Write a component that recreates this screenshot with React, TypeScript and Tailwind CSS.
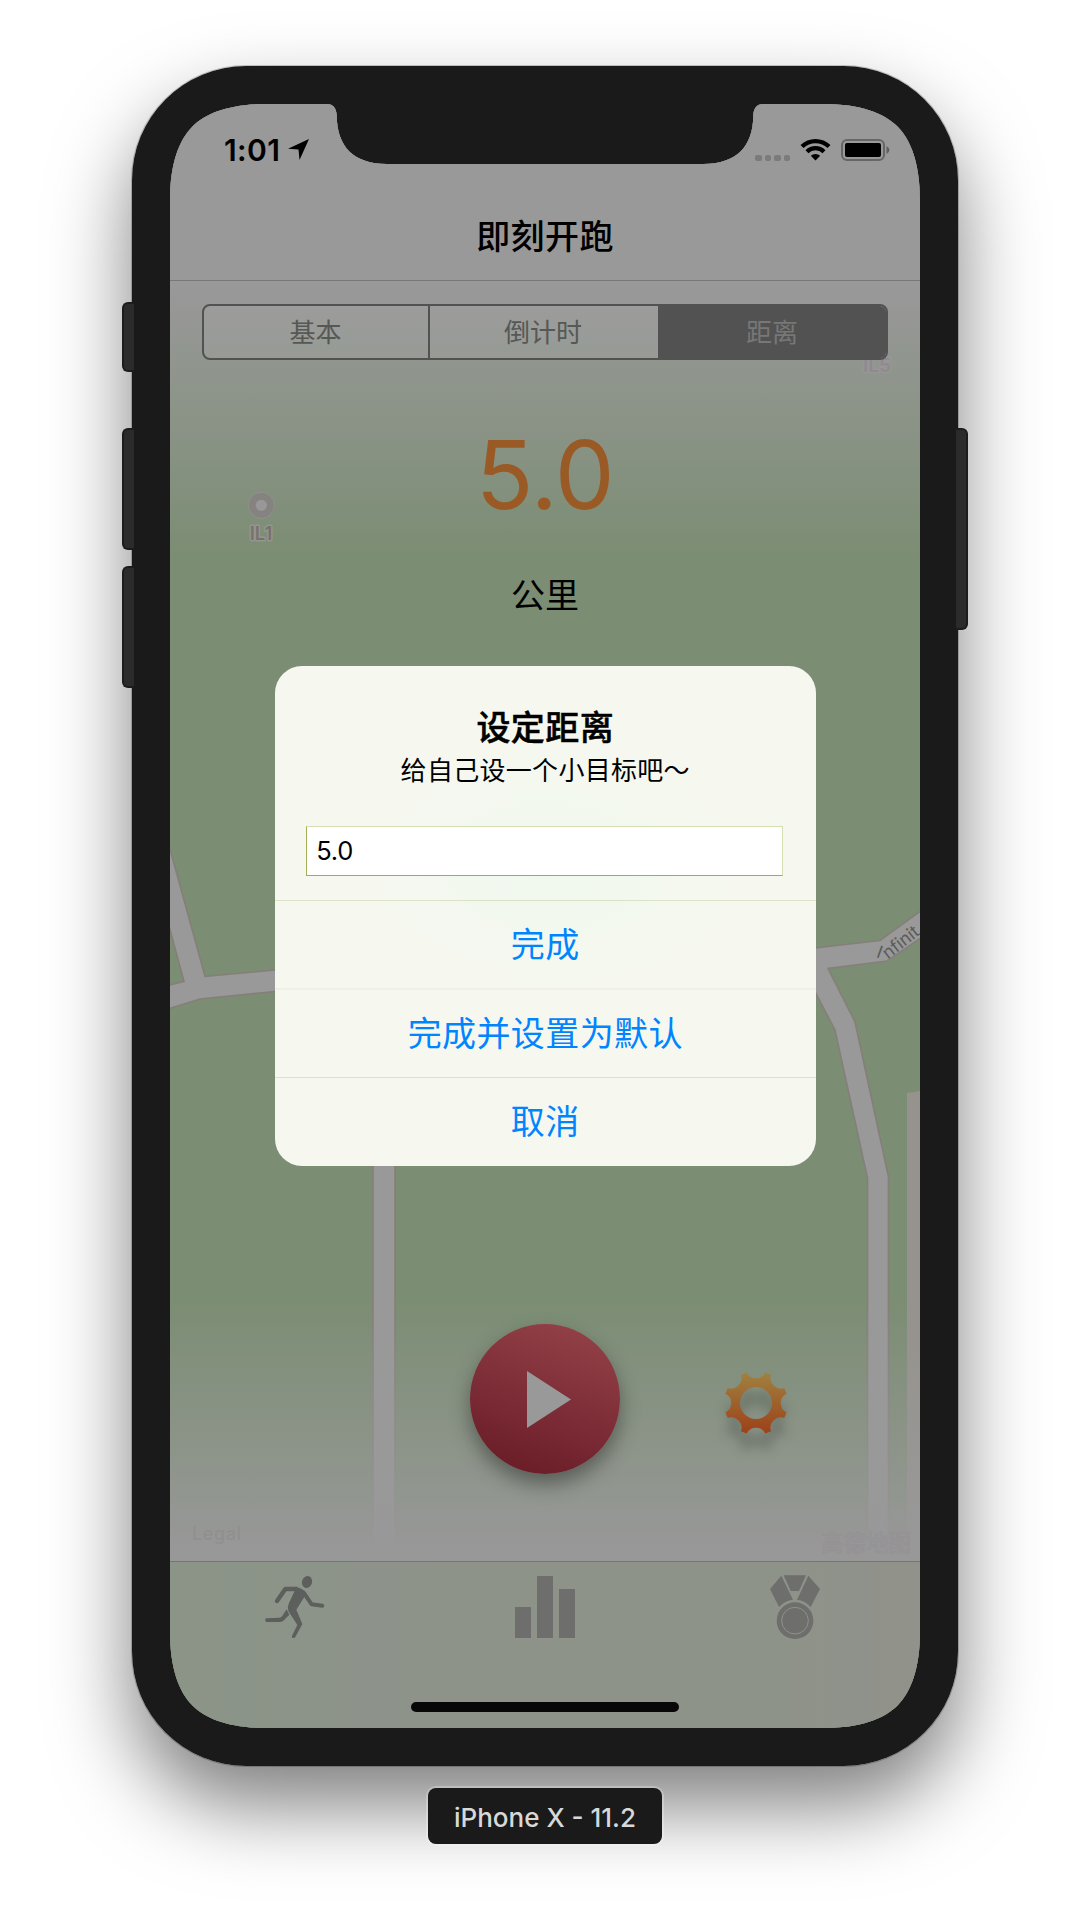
import React from "react";

const polar = (radius: number, degrees: number) => {
  const a = ((degrees - 90) * Math.PI) / 180;
  return `${(32 + radius * Math.cos(a)).toFixed(2)} ${(32 + radius * Math.sin(a)).toFixed(2)}`;
};

const gearPath =
  Array.from({ length: 8 }, (_, i) => {
    const valley = i * 45;
    return `${i === 0 ? "M" : "L"}${polar(32, valley - 17)} A10.4 10.4 0 0 0 ${polar(32, valley + 17)}`;
  }).join(" ") + " Z M16 32 a16 16 0 1 0 32 0 a16 16 0 1 0 -32 0 Z";

function MapBackground() {
  return (
    <svg className="absolute inset-0 h-full w-full" viewBox="170 104 750 1624">
      <defs>
        <linearGradient id="fadeTop" x1="0" y1="0" x2="0" y2="1">
          <stop offset="0" stopColor="#999999" />
          <stop offset="0.08" stopColor="#999899" stopOpacity="0.94" />
          <stop offset="0.36" stopColor="#999999" stopOpacity="0.65" />
          <stop offset="0.62" stopColor="#999999" stopOpacity="0.42" />
          <stop offset="1" stopColor="#999999" stopOpacity="0" />
        </linearGradient>
        <linearGradient id="fadeBottom" x1="0" y1="0" x2="0" y2="1">
          <stop offset="0" stopColor="#999999" stopOpacity="0" />
          <stop offset="0.4" stopColor="#999999" stopOpacity="0.42" />
          <stop offset="0.7" stopColor="#999999" stopOpacity="0.7" />
          <stop offset="0.93" stopColor="#999899" stopOpacity="0.95" />
          <stop offset="1" stopColor="#999899" />
        </linearGradient>
      </defs>
      <rect x="170" y="104" width="750" height="1624" fill="#7b8d73" />
      <path
        d="M165 831 L205 976.5 L275 970 L815 948 L880 940.5 L925 908 V935 L887 961 L828 968.5 L855 1022 L888.5 1177 V1570 H867.5 V1178 L835 1030 L812 986 H395 V1570 H373 V986 L275 991.5 L200 999 L165 1010 V986 L184 981.5 L165 911 Z"
        fill="#999999"
        stroke="#857f7a"
        strokeWidth="1.6"
      />
      <path d="M907 1093 L920 1091 V1565 H907 Z" fill="#96928d" />
      <g fontFamily="Inter, sans-serif" fontSize="17.5" fill="#5c5c5b">
        <text transform="translate(875.5 957) rotate(20)">I</text>
        <text transform="translate(888 959.5) rotate(-38)">nfinit</text>
      </g>
      <rect x="170" y="281" width="750" height="274" fill="url(#fadeTop)" />
      <rect x="170" y="1300" width="750" height="261" fill="url(#fadeBottom)" />
      <circle cx="261.3" cy="505.3" r="13" fill="#858280" stroke="#8f928c" strokeWidth="1" />
      <circle cx="261.3" cy="505.3" r="5.6" fill="#999798" />
      <g fontFamily="Inter, sans-serif" fontWeight="600" textAnchor="middle" paintOrder="stroke" strokeLinejoin="round">
        <text x="261" y="539.5" fontSize="18.5" fill="#75726d" stroke="#95958f" strokeWidth="3">IL1</text>
        <text x="877" y="372" fontSize="19" fill="#8e8b8d" stroke="#989698" strokeWidth="3">IL5</text>
      </g>
      <text x="192" y="1540" fontFamily="Inter, sans-serif" fontSize="18" fontWeight="500" letterSpacing="0.6" fill="#918f8f">
        Legal
      </text>
      <text x="821" y="1551" fontFamily="'Noto Sans CJK SC', sans-serif" fontSize="22.5" fontWeight="500" fill="#979597" stroke="#929192" strokeWidth="0.5">
        高德地图
      </text>
    </svg>
  );
}

function StatusBar() {
  return (
    <div className="flex h-[88px] items-start justify-between pt-[34px] pr-[30px] pl-[54px]">
      <div className="flex items-start gap-[7px]">
        <span className="w-[57px] text-[30px] leading-[25px] font-semibold tracking-[0.4px] text-black">1:01</span>
        <svg className="mt-px h-[21px] w-[21px]" viewBox="0 0 62 62">
          <path d="M62 0 L0 29 L31 31 L34 62 Z" fill="black" />
        </svg>
      </div>
      <div className="flex items-start">
        <div className="mt-[17px] mr-[10px] flex gap-[3px]">
          {[0, 1, 2, 3].map((i) => (
            <span key={i} className="h-[6px] w-[6.4px] rounded-[2px] bg-[#7b7b7b]" />
          ))}
        </div>
        <svg className="mr-[10px] h-[23px] w-[31px]" viewBox="0 0 31 23">
          <g fill="none" stroke="black" strokeWidth="4.2">
            <path d="M2 8.6 A19.2 19.2 0 0 1 29 8.6" />
            <path d="M7 13.7 A12 12 0 0 1 24 13.7" />
          </g>
          <path d="M15.5 22.5 L10.8 17.8 A6.8 6.8 0 0 1 20.2 17.8 Z" fill="black" />
        </svg>
        <div className="mt-px h-[22px] w-[44px] rounded-[6px] border-2 border-[#666666] p-[2px]">
          <div className="h-full w-full rounded-[2px] bg-black" />
        </div>
        <svg className="mt-[8px] ml-[1px] h-[8px] w-[4px]" viewBox="0 0 4 8">
          <path d="M0.5 0 Q3.5 2 3.5 4 Q3.5 6 0.5 8 Z" fill="#5f5f5f" />
        </svg>
      </div>
    </div>
  );
}

function RunnerIcon() {
  return (
    <svg className="mr-[2px] h-[64px] w-[61px]" viewBox="315 285 183 192" fill="none" stroke="#5d5f5c" strokeLinecap="round" strokeLinejoin="round">
      <ellipse cx="444" cy="306" rx="15" ry="18" transform="rotate(20 444 306)" fill="#5d5f5c" stroke="none" />
      <path d="M354 363 L379 327 H412" strokeWidth="13" />
      <path d="M434 338 L458 373 L490 377" strokeWidth="12" />
      <path d="M402 321 Q430 320 442 341 L412 389 L430 432 L409 471 Q406 475 399 473 V467 L415 435 L388 393 Q384 380 390 369 L407 332 Z" fill="#5d5f5c" stroke="none" />
      <path d="M383 388 L391 404 L373 422 Q369 426 361 426 H322 A6 6 0 0 1 322 415 L361 413.500 Q366 413 369 409 Z" fill="#5d5f5c" stroke="none" />
    </svg>
  );
}

function MedalIcon() {
  return (
    <svg className="h-[64px] w-[50px]" viewBox="690 285 150 192" fill="#6e6e6c">
      <path d="M731 286 H798 L777 333 H752 Z" />
      <path d="M724 287 L759 359 Q735 362 717 381 L690 327 Z" />
      <path d="M805 287 L840 327 L812 381 Q795 362 771 359 Z" />
      <circle cx="765" cy="422" r="55" />
      <circle cx="765" cy="422" r="40" fill="none" stroke="#8e938a" strokeWidth="3" />
    </svg>
  );
}

function TabBar() {
  return (
    <nav className="relative flex h-[167px] justify-around border-t border-[#747673] bg-[linear-gradient(to_right,#8b9587,#8d938a_25%,#8d9389_78%,#91928b)] pt-[13px]">
      <button className="flex h-[64px] w-[250px] justify-center">
        <RunnerIcon />
      </button>
      <button className="mt-px flex h-[62px] w-[250px] items-end justify-center gap-[5.5px]">
        <span className="h-[31px] w-[16.500px] bg-[#6e6e6c]" />
        <span className="h-[62px] w-[16.500px] bg-[#6e6e6c]" />
        <span className="h-[49px] w-[16.500px] bg-[#6e6e6c]" />
      </button>
      <button className="flex h-[64px] w-[250px] justify-center">
        <MedalIcon />
      </button>
      <span className="absolute bottom-[16px] left-[241px] h-[10px] w-[268px] rounded-full bg-[#080808]" />
    </nav>
  );
}

function Dialog() {
  return (
    <section className="absolute top-[562px] left-[105px] flex h-[500px] w-[540.5px] flex-col rounded-[27px] bg-[#f6f8f0] bg-[radial-gradient(ellipse_190px_120px_at_270px_200px,#f0f8ee,#f6f8f0)] text-center">
      <div className="flex h-[234px] shrink-0 flex-col items-center">
        <h2 className="mt-[40px] text-[34px] leading-[44px] font-medium tracking-[0.4px] text-black [-webkit-text-stroke:0.5px_black]">设定距离</h2>
        <p className="mt-[5px] text-[26px] leading-[32px] tracking-[0.3px] text-black">给自己设一个小目标吧～</p>
        <div className="mt-[39px] ml-[-1px] flex h-[50px] w-[477px] items-center border border-t-[#d5dfb4] border-r-[#d5dfb4] border-b-[#93b060] border-l-[#a3b055] bg-white pl-[9px] text-[25.500px] tracking-[-0.3px] text-black">
          5.0
        </div>
      </div>
      <button className="h-[88px] shrink-0 border-t border-[#dbe2c5] text-[34px] leading-[88px] tracking-[0.4px] text-[#0085ff]">完成</button>
      <button className="h-[89px] shrink-0 border-t-2 border-[#eff1e9] text-[34px] leading-[88px] tracking-[0.4px] text-[#0085ff]">完成并设置为默认</button>
      <button className="h-[89px] shrink-0 border-t border-[#dbe2c5] text-[34px] leading-[88px] tracking-[0.4px] text-[#0085ff]">取消</button>
    </section>
  );
}

function Screen() {
  return (
    <div className="relative flex h-[1624px] w-[750px] flex-col overflow-hidden bg-[#999999] [clip-path:path('M0,96_C0,60_9,36_22.5,22.5_C36,9_60,0_96,0_L157,0_C163,0_166.5,4_166.8,12_C167,43_184,60_217,60_L533,60_C566,60_583,43_583.2,12_C583.5,4_587,0_593,0_L654,0_C690,0_714,9_727.5,22.5_C741,36_750,60_750,96_L750,1528_C750,1564_741,1588_727.5,1601.5_C714,1615_690,1624_654,1624_L96,1624_C60,1624_36,1615_22.5,1601.5_C9,1588_0,1564_0,1528_Z')]">
      <MapBackground />
      <header className="relative h-[177px] border-b border-[#787878] bg-[#999999]">
        <StatusBar />
        <h1 className="text-center text-[34px] leading-[89px] font-medium tracking-[0.4px] text-black">即刻开跑</h1>
      </header>
      <main className="relative flex-1">
        <div className="mx-[32px] mt-[23px] flex h-[56px] overflow-hidden rounded-[8px] border-2 border-[#525252] bg-white/5 text-[26px] leading-[54px] text-[#565856]">
          <button className="w-[226px] border-r-2 border-[#525252] pr-px">基本</button>
          <button className="w-[228px] pr-[2px]">倒计时</button>
          <button className="flex-1 bg-[#525252] text-[#777777]">距离</button>
        </div>
        <div className="mt-[55px] text-center text-[95px] leading-[120px] font-normal tracking-[-0.5px] text-[#9a5a26]">5.0</div>
        <div className="mt-[39px] text-center text-[34px] leading-[44px] font-normal text-black">公里</div>
        <div className="mt-[706px] flex h-[150px] items-center pl-[300px]">
          <button className="flex h-[150px] w-[150px] items-center justify-center rounded-full bg-[linear-gradient(20deg,#681c26_5%,#7c2c36_45%,#944249_95%)] shadow-[0_10px_20px_rgba(0,0,0,0.38)]">
            <svg className="ml-[8px] h-[57px] w-[44px]" viewBox="0 0 44 57">
              <path d="M0 0 L44 28.500 L0 57 Z" fill="#999999" />
            </svg>
          </button>
          <svg className="mt-[7px] ml-[104px] h-[64px] w-[64px] overflow-visible drop-shadow-[0_17px_6px_rgba(0,0,0,0.2)]" viewBox="0 0 64 64">
            <defs>
              <linearGradient id="gearFill" x1="0" y1="0" x2="0" y2="1">
                <stop offset="0" stopColor="#a08240" />
                <stop offset="1" stopColor="#9c4118" />
              </linearGradient>
            </defs>
            <path d={gearPath} fill="url(#gearFill)" fillRule="evenodd" />
          </svg>
        </div>
      </main>
      <TabBar />
      <Dialog />
    </div>
  );
}

export default function App() {
  return (
    <div className="flex h-[1928px] w-[1090px] flex-col items-center overflow-hidden bg-white font-['Inter','Noto_Sans_CJK_SC',sans-serif]">
      <div className="relative mt-[66px] h-[1700px] w-[826px] shrink-0">
        <div className="absolute inset-0 rounded-[114px] shadow-[0_0_0_1px_rgba(0,0,0,0.2),0_40px_80px_rgba(0,0,0,0.5)]" />
        <div className="relative h-full w-full rounded-[114px] bg-[#1a1a1a] p-[38px]">
          <Screen />
        </div>
        <span className="absolute top-[236px] left-[-10px] h-[70px] w-[12px] rounded-l-[6px] border-2 border-r-0 border-[#1c1c1c] bg-[#2b2b2b]" />
        <span className="absolute top-[362px] left-[-10px] h-[122px] w-[12px] rounded-l-[6px] border-2 border-r-0 border-[#1c1c1c] bg-[#2b2b2b]" />
        <span className="absolute top-[500px] left-[-10px] h-[122px] w-[12px] rounded-l-[6px] border-2 border-r-0 border-[#1c1c1c] bg-[#2b2b2b]" />
        <span className="absolute top-[362px] right-[-10px] h-[202px] w-[12px] rounded-r-[6px] border-2 border-l-0 border-[#1c1c1c] bg-[#2b2b2b]" />
      </div>
      <div className="relative mt-[22px] h-[56px] w-[234px] shrink-0 rounded-[8px] bg-[#1a1a1a] text-center text-[26px] leading-[59px] font-medium text-[#d8d8d8] shadow-[0_0_0_2px_rgba(255,255,255,0.25)]">
        iPhone X - 11.2
      </div>
    </div>
  );
}
